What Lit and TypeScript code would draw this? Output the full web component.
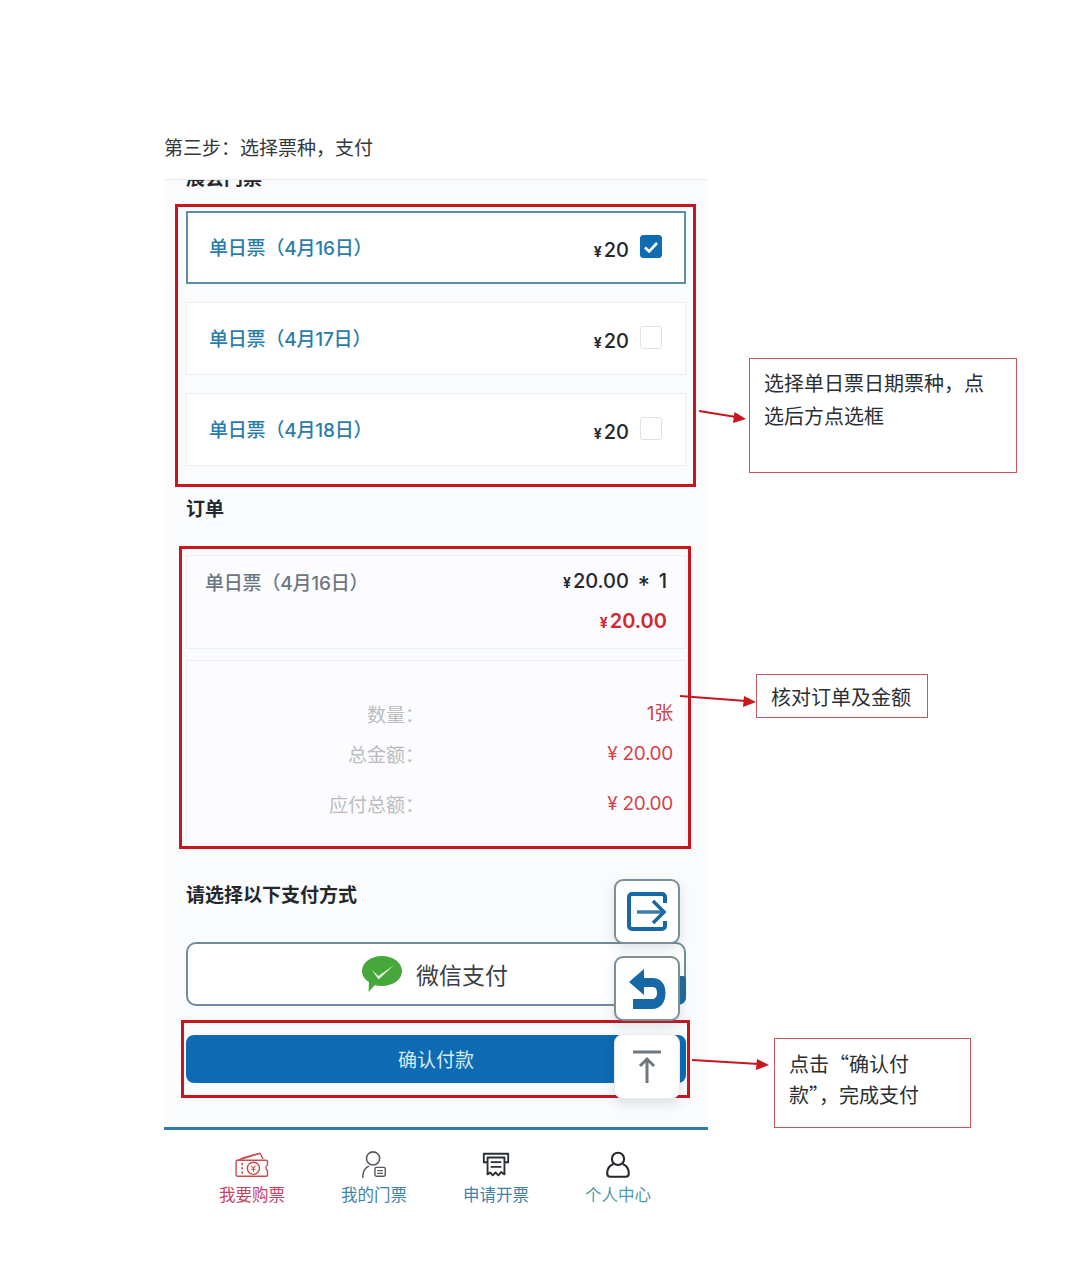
import { LitElement, html, css, svg } from "lit";
import { customElement } from "lit/decorators.js";

const dates = [
  { label: "单日票（4月16日）", checked: true },
  { label: "单日票（4月17日）", checked: false },
  { label: "单日票（4月18日）", checked: false },
];

const navIcons = {
  buy: svg`<g fill="none" stroke="#c9504f" stroke-width="1.5" stroke-linejoin="round" stroke-linecap="round">
    <path d="M3 11 L27 3.5 L30 9"/><path d="M7 9 L25 4" />
    <path d="M3 11 H34 a1 1 0 0 1 1 1 v4 a3.5 3.5 0 0 0 0 6 v5 a1 1 0 0 1 -1 1 H3 a1.5 1.5 0 0 1 -1.5 -1.5 V12.5 A1.5 1.5 0 0 1 3 11 Z"/>
    <circle cx="20" cy="19.500" r="6.500"/><path d="M18 17 l2 2.500 l2 -2.500 M20 19.500 v3.500 M18 20.500 h4" stroke-width="1.100"/>
    <path d="M8 14.500 v1 M8 19 v1 M8 23.500 v1" stroke-width="1.800"/></g>`,
  mine: svg`<g fill="none" stroke="#555b60" stroke-width="1.700" stroke-linecap="round">
    <circle cx="15" cy="9" r="7"/><path d="M4 29 C4 23 7 19 10 17.500"/>
    <rect x="17" y="18.500" width="11" height="9.500" rx="1.500" stroke-width="1.500"/><path d="M20 22 h5 M20 25 h5" stroke-width="1.300"/></g>`,
  invoice: svg`<g fill="none" stroke="#2b2f33" stroke-width="2" stroke-linejoin="round" stroke-linecap="round">
    <path d="M6 13 H3 V4 H29 V13 H26"/><path d="M7 8 H25 V26 L21.500 23.500 L18.500 27 L15.500 24 L12.500 27 L10 24 L7 26 Z"/>
    <path d="M11 13 H21 M11 18 H21" stroke-width="1.800"/></g>`,
  me: svg`<g fill="none" stroke="#24282c" stroke-width="2.200" stroke-linejoin="round">
    <circle cx="16" cy="9.500" r="6.500"/><path d="M11 15 C6 17 4.500 21 4.500 25 C4.500 27.500 6 28.500 8 28.500 H24 C26 28.500 27.500 27.500 27.500 25 C27.500 21 26 17 21 15"/></g>`,
};

const tabs = [
  { label: "我要购票", icon: navIcons.buy, vb: "0 0 37 32", w: 38, tone: "red" },
  { label: "我的门票", icon: navIcons.mine, vb: "0 0 32 32", w: 30, tone: "blue" },
  { label: "申请开票", icon: navIcons.invoice, vb: "0 0 32 32", w: 30, tone: "blue" },
  { label: "个人中心", icon: navIcons.me, vb: "0 0 32 32", w: 30, tone: "teal" },
];

@customElement("app-root")
export class AppRoot extends LitElement {
  static styles = css`
    :host {
      display: block;
      position: relative;
      width: 1080px;
      height: 1267px;
      overflow: hidden;
      background: #fff;
      font-family: "Noto Sans CJK SC", sans-serif;
      color: #2f3337;
      box-sizing: border-box;
      padding: 133px 0 0 164px;
    }
    * { box-sizing: border-box; }
    .step { font-size: 19px; line-height: 28px; height: 46px; color: #33373b; }
    .phone {
      position: relative;
      width: 544px;
      height: 1043px;
      overflow: hidden;
      background: #fafbfd;
      border-top: 1px solid #ececee;
      display: flex;
      flex-direction: column;
      padding: 0 22px;
    }
    .title { font-size: 19px; line-height: 24px; font-weight: 700; color: #24282c; }
    .clipped { margin-top: -15px; margin-bottom: 22px; }
    .tickets { display: flex; flex-direction: column; gap: 18px; }
    .ticket {
      height: 73px;
      background: #fff;
      border: 1px solid #eceef0;
      display: flex;
      align-items: center;
      padding: 0 23px 2px 22px;
    }
    .ticket.on { border: 2px solid #5c90a8; padding-left: 21px; padding-right: 22px; }
    .t-name { font-size: 19px; font-weight: 500; color: #2b7cab; flex: 1; font-family: "Inter", "Noto Sans CJK SC", sans-serif; letter-spacing: -0.2px; }
    .t-price { font-family: "Inter", sans-serif; font-size: 20px; font-weight: 500; color: #24282c; margin: 6px 11px 0 0; }
    .yen { font-size: 14px; font-weight: 700; margin-right: 2px; }
    .box { width: 22px; height: 23px; border: 1px solid #dfe2e5; border-radius: 3px; background: #fff; display: flex; align-items: center; justify-content: center; }
    .box.on { background: #0f6cb0; border-color: #0f6cb0; }
    .order-title { margin-top: 30px; }
    .o1 {
      margin-top: 35px;
      height: 94px;
      background: #fcfcfe;
      border: 1px solid #eceef0;
      padding: 13px 18px 0;
    }
    .o1-row { display: flex; justify-content: space-between; align-items: center; height: 24px; }
    .o1-name { font-size: 19px; font-weight: 500; color: #6d7780; font-family: "Inter", "Noto Sans CJK SC", sans-serif; letter-spacing: -0.2px; }
    .o1-price { font-family: "Inter", sans-serif; font-size: 20px; font-weight: 500; color: #24282c; word-spacing: 3px; }
    .o1-total { font-family: "Inter", sans-serif; font-size: 20px; font-weight: 600; color: #d3272f; text-align: right; margin-top: 16px; line-height: 24px; }
    .o2 {
      margin-top: 11px;
      height: 187px;
      background: #fcfcfe;
      border: 1px solid #eceef0;
      border-bottom: 0;
      padding: 41px 12px 0 0;
    }
    .o2-row { display: grid; grid-template-columns: 237px 1fr; height: 24px; line-height: 24px; font-size: 19px; }
    .o2-row + .o2-row { margin-top: 16px; }
    .o2-row.far { margin-top: 26px; }
    .o2-k { text-align: right; color: #b9bcc0; }
    .o2-v { text-align: right; color: #d0454d; font-family: "Inter", "Noto Sans CJK SC", sans-serif; letter-spacing: -0.3px; }
    .pay-title { margin-top: 35px; }
    .pay {
      position: relative;
      margin-top: 36px;
      height: 64px;
      background: #fff;
      border: 2px solid #6e8c9b;
      border-radius: 10px;
      display: flex;
      align-items: center;
      justify-content: center;
      gap: 13px;
      font-size: 23px;
      color: #3a3f44;
      padding-right: 3px;
    }
    .sliver { position: absolute; right: -2px; top: 32px; width: 6px; height: 28px; background: #1f6a9c; border-radius: 0 4px 8px 0; }
    .confirm {
      margin-top: 29px;
      height: 48px;
      background: #0d6ab3;
      border-radius: 8px;
      color: #d4edf6;
      font-size: 19px;
      display: flex;
      align-items: center;
      justify-content: center;
      padding-bottom: 2px;
    }
    .nav {
      margin: 44px -22px 0;
      flex: 1;
      background: #fff;
      border-top: 3px solid #2f7ba6;
      display: grid;
      grid-template-columns: repeat(4, 122px);
      padding: 20px 0 0 27px;
    }
    .tab { display: flex; flex-direction: column; align-items: center; font-size: 16.500px; line-height: 22px; }
    .tab svg { display: block; height: 30px; margin-bottom: 3px; }
    .tab.red { color: #c8435f; }
    .tab.blue { color: #3f83a9; }
    .tab.teal { color: #4c9aad; }
    .fab {
      position: absolute;
      left: 450px;
      width: 66px;
      height: 65px;
      background: #fff;
      border: 2px solid #7f8f9a;
      border-radius: 9px;
      box-shadow: 0 5px 12px rgba(60, 80, 100, 0.16);
      display: flex;
      align-items: center;
      justify-content: center;
      z-index: 3;
    }
    .fab.plain { border: 1px solid #e8eaec; }
    .f1 { top: 699px; }
    .f2 { top: 776px; }
    .f3 { top: 854px; }
    .mark { position: absolute; border: 3px solid #c9151e; }
    .note {
      position: absolute;
      background: #fff;
      border: 1.500px solid #c8585c;
      font-size: 20px;
      line-height: 33px;
      color: #2b2f33;
    }
    .n1 { left: 749px; top: 358px; width: 268px; height: 115px; padding: 7px 0 0 14px; }
    .n2 { left: 756px; top: 674px; width: 172px; height: 44px; padding: 5px 0 0 14px; }
    .n3 { left: 774px; top: 1038px; width: 197px; height: 90px; padding: 9px 0 0 14px; line-height: 31px; }
    .arrows { position: absolute; left: 0; top: 0; width: 1080px; height: 1267px; pointer-events: none; }
  `;

  render() {
    return html`
      <div class="step">第三步：选择票种，支付</div>
      <div class="phone">
        <div class="title clipped">展会门票</div>
        <div class="tickets">
          ${dates.map(
            (d) => html`<div class="ticket ${d.checked ? "on" : ""}">
              <span class="t-name">${d.label}</span>
              <span class="t-price"><span class="yen">¥</span>20</span>
              <span class="box ${d.checked ? "on" : ""}">
                ${d.checked
                  ? html`<svg width="16" height="14" viewBox="0 0 16 14"><path d="M2 7.500 L6.200 11.500 L14 3" fill="none" stroke="#fff" stroke-width="2.600"/></svg>`
                  : ""}
              </span>
            </div>`
          )}
        </div>
        <div class="title order-title">订单</div>
        <div class="o1">
          <div class="o1-row">
            <span class="o1-name">单日票（4月16日）</span>
            <span class="o1-price"><span class="yen">¥</span>20.00 * 1</span>
          </div>
          <div class="o1-total"><span class="yen">¥</span>20.00</div>
        </div>
        <div class="o2">
          <div class="o2-row"><span class="o2-k">数量：</span><span class="o2-v">1张</span></div>
          <div class="o2-row"><span class="o2-k">总金额：</span><span class="o2-v">¥ 20.00</span></div>
          <div class="o2-row far"><span class="o2-k">应付总额：</span><span class="o2-v">¥ 20.00</span></div>
        </div>
        <div class="title pay-title">请选择以下支付方式</div>
        <div class="pay">
          <svg width="42" height="38" viewBox="0 0 42 38">
            <path d="M21 1 C32 1 41 7.500 41 16 C41 24.500 32 31 21 31 C18.500 31 16 30.600 14 30 L7.500 37 L8 27 C3.500 24.500 1 20.500 1 16 C1 7.500 10 1 21 1 Z" fill="#46a83a"/>
            <path d="M11 15 L17.500 21 L33 10 L17.500 24.500 Z" fill="#eef7e8"/>
          </svg>
          <span>微信支付</span>
          <span class="sliver"></span>
        </div>
        <div class="confirm">确认付款</div>
        <div class="nav">
          ${tabs.map(
            (t) => html`<div class="tab ${t.tone}">
              <svg width=${t.w} viewBox=${t.vb}>${t.icon}</svg>
              <span>${t.label}</span>
            </div>`
          )}
        </div>
        <div class="fab f1">
          <svg width="42" height="40" viewBox="0 0 42 40" fill="none" stroke="#1669a6" stroke-width="4">
            <path d="M39 11 V5 a3 3 0 0 0 -3 -3 H6 a3 3 0 0 0 -3 3 V34 a3 3 0 0 0 3 3 H36 a3 3 0 0 0 3 -3 V29"/>
            <path d="M11 20 H36" stroke="#3f7ea8" stroke-width="3.500"/>
            <path d="M27 9 L38 20 L27 31" stroke-width="3.500"/>
          </svg>
        </div>
        <div class="fab f2">
          <svg width="38" height="42" viewBox="0 0 38 42" fill="#1669a6">
            <path d="M16 1 L1 14 L16 27 V19 H24 C27.500 19 29 21 29 25 C29 29 27 31 24 31 H5 V41 H24 C33 41 37.500 34 37.500 25 C37.500 16 33 10 24 10 H16 Z"/>
          </svg>
        </div>
        <div class="fab f3 plain">
          <svg width="30" height="34" viewBox="0 0 30 34" fill="none" stroke="#6f777f">
            <path d="M1 2 H29" stroke-width="3"/>
            <path d="M15 33 V10 M8 16 L15 9 L22 16" stroke-width="3"/>
          </svg>
        </div>
      </div>
      <div class="mark" style="left:175px;top:204px;width:521px;height:283px"></div>
      <div class="mark" style="left:179px;top:546px;width:512px;height:303px"></div>
      <div class="mark" style="left:181px;top:1020px;width:509px;height:78px"></div>
      <svg class="arrows" viewBox="0 0 1080 1267" fill="#c9151e" stroke="#c9151e" stroke-width="2">
        <path d="M699 411 L736 417" fill="none"/><path d="M746 419 L733 423 L734.500 412 Z" stroke="none"/>
        <path d="M680 696 L746 701" fill="none"/><path d="M756 702 L743 707 L744 696 Z" stroke="none"/>
        <path d="M692 1060 L759 1064" fill="none"/><path d="M769 1065 L756 1070 L757 1059 Z" stroke="none"/>
      </svg>
      <div class="note n1">选择单日票日期票种，点<br />选后方点选框</div>
      <div class="note n2">核对订单及金额</div>
      <div class="note n3">点击“确认付<br />款”，完成支付</div>
    `;
  }
}
